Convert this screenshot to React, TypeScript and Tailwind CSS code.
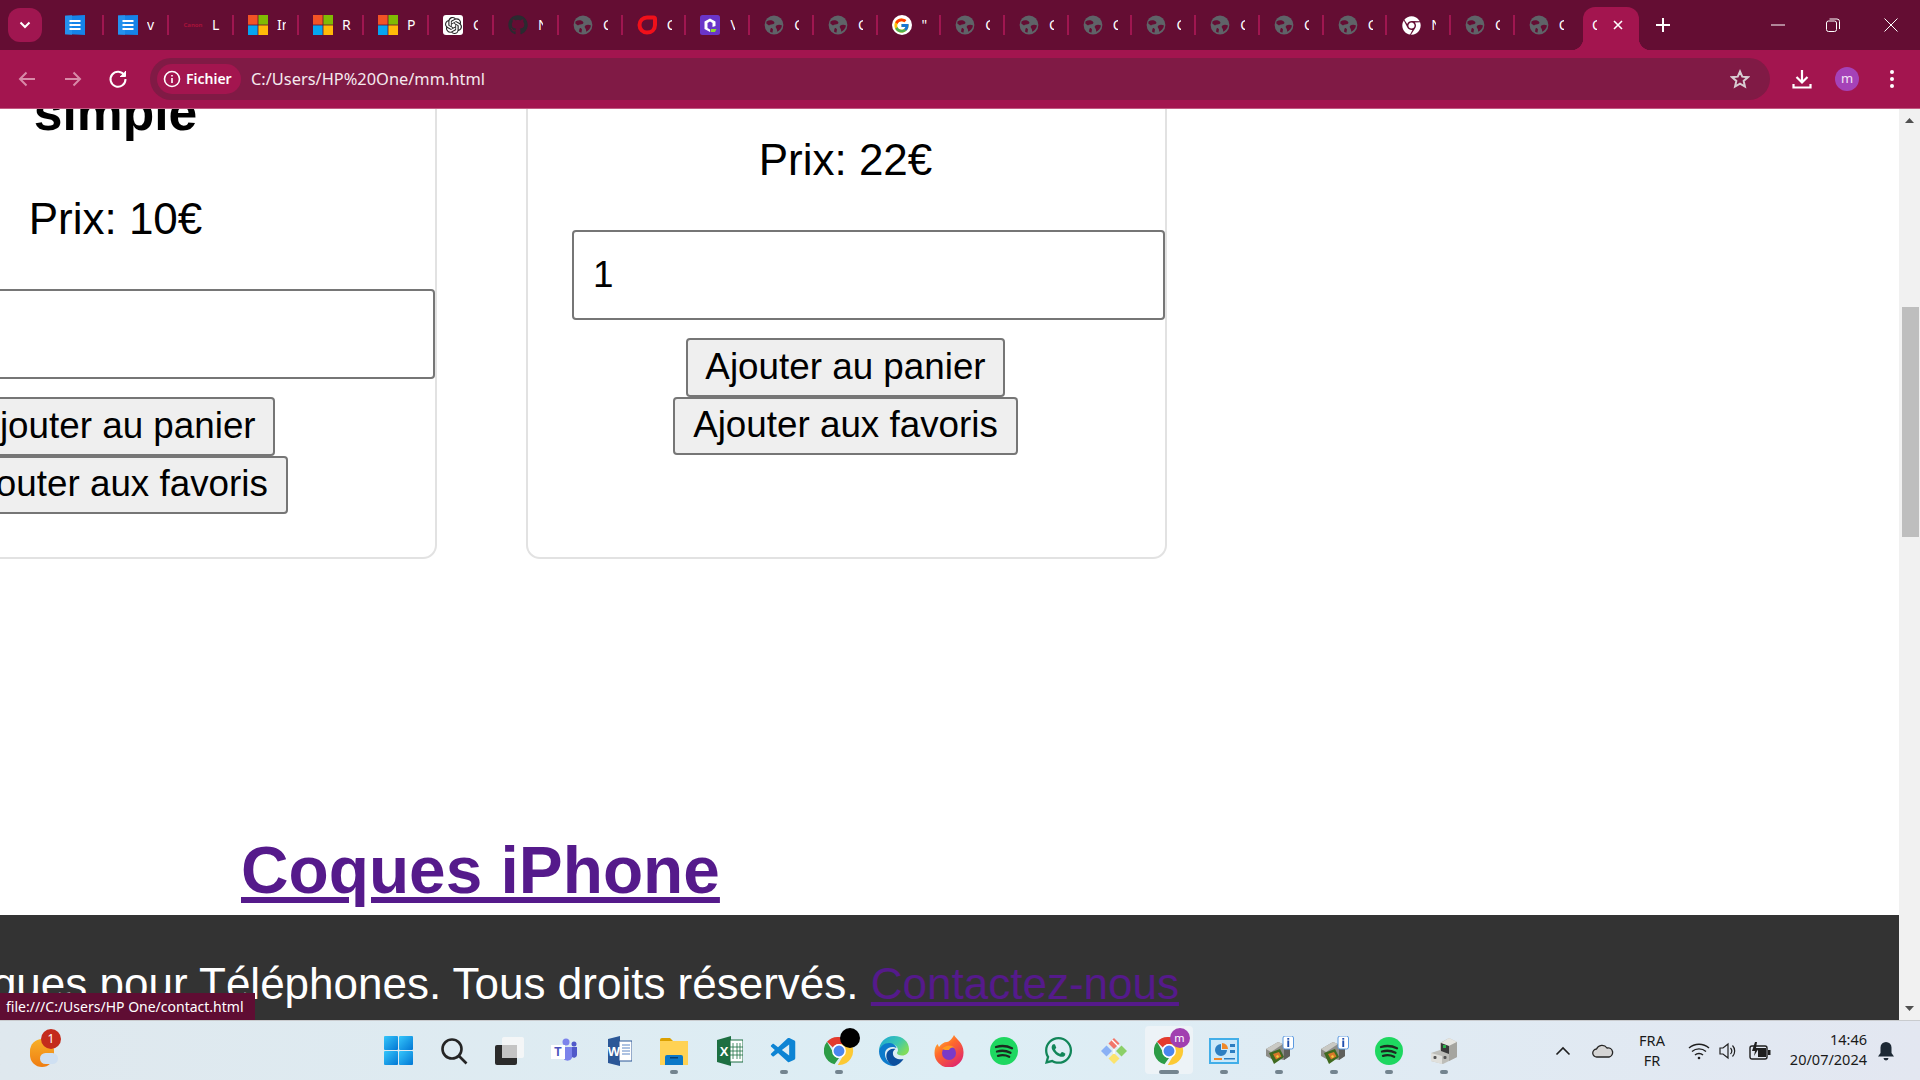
import React from "react";
import { FaGithub, FaChrome, FaWhatsapp } from "react-icons/fa";
import { FcGoogle } from "react-icons/fc";
import { SiOpenai } from "react-icons/si";
import { VscVscode } from "react-icons/vsc";

const UI = { fontFamily: '"Noto Sans", "Open Sans", sans-serif' };
const STRIP = "#640d33";

function Globe() {
  return (
    <svg width="20" height="20" viewBox="0 0 20 20">
      <circle cx="10" cy="10" r="9.400" fill="#5f6368" />
      <path d="M2.500 6.500C5 4.800 8 5 9.800 6.600c1 .9.800 2-.3 2.500-1.300.6-3.300.4-4.500 1.400L2.300 8.500z" fill={STRIP} />
      <path d="M18 10.500c-1.800-.8-4-.9-5.500 0-1 .7-1 1.800-.2 2.700.7.8.9 2.100.8 3.600 2.500-1.300 4.500-3.500 4.900-6.300z" fill={STRIP} />
      <path d="M7 13c.9 0 1.700.6 2 1.500l-.6 3.200c-1-.2-1.600-.5-2.300-.9.100-1.300.2-2.800.9-3.800z" fill={STRIP} />
    </svg>
  );
}
function Doc({ wide }: { wide?: boolean }) {
  return (
    <svg width="20" height="20" viewBox="0 0 20 20">
      <path d={wide ? "M0 .5 20 0v20L0 19.500z" : "M0 1 20 0v20L0 19z"} fill="#1583e9" />
      <path d="M0 .5 7 0v20l-7-.5z" fill="#2b97f0" opacity=".7" />
      <rect x="4.500" y="5" width="11" height="2" fill="#fff" />
      <rect x="4.500" y="9" width="11" height="2" fill="#fff" />
      <rect x="4.500" y="13" width="11" height="2" fill="#fff" />
    </svg>
  );
}
function Ms() {
  return (
    <svg width="20" height="20" viewBox="0 0 20 20">
      <rect width="9.600" height="9.600" fill="#f25325" />
      <rect x="10.400" width="9.600" height="9.600" fill="#80bb03" />
      <rect y="10.400" width="9.600" height="9.600" fill="#05a5f0" />
      <rect x="10.400" y="10.400" width="9.600" height="9.600" fill="#ffba08" />
    </svg>
  );
}
function Opera() {
  return (
    <svg width="20" height="20" viewBox="0 0 20 20">
      <path d="M10 2.500h6.500a1.500 1.500 0 0 1 1.500 1.500v6c0 4.500-3.500 7.500-8 7.500a7.500 7.500 0 0 1 0-15z" fill="none" stroke="#f0101a" strokeWidth="4" />
    </svg>
  );
}
function Purple() {
  return (
    <svg width="20" height="20" viewBox="0 0 20 20">
      <rect width="20" height="20" rx="2.500" fill="#6a35c9" />
      <path d="M10 3.500 15.500 6.500V11l-3 1V8L10 6.500 7.500 8v5l2.500 1.600V17L4.500 14V6.500z" fill="#fff" />
      <path d="M11 14h5.500l-1.500 3h-4.500z" fill="#8fdc2c" />
    </svg>
  );
}

type T = { icon: React.ReactNode; label: string; full?: boolean };
const globe = { icon: <Globe />, label: "C" };
const tabs: T[] = [
  { icon: <Doc />, label: "" },
  { icon: <Doc wide />, label: "v", full: true },
  { icon: <span className="block w-[20px] text-center text-[6px] font-bold leading-[20px] text-[#a8123a]">Canon</span>, label: "L", full: true },
  { icon: <Ms />, label: "In", full: true },
  { icon: <Ms />, label: "R", full: true },
  { icon: <Ms />, label: "P", full: true },
  { icon: <span className="flex h-[20px] w-[20px] items-center justify-center rounded-[3px] bg-white"><SiOpenai size={17} color="#222" /></span>, label: "C" },
  { icon: <FaGithub size={20} color="#2a2a30" />, label: "N" },
  globe,
  { icon: <Opera />, label: "C" },
  { icon: <Purple />, label: "V" },
  globe,
  globe,
  { icon: <span className="flex h-[20px] w-[20px] items-center justify-center rounded-full bg-white"><FcGoogle size={17} /></span>, label: '"' },
  globe, globe, globe, globe, globe, globe, globe,
  { icon: <FaChrome size={19} color="#fff" />, label: "N" },
  globe, globe,
];

function TabStrip() {
  return (
    <div className="flex h-[50px] shrink-0 items-start bg-[#640d33]" style={UI}>
      <div className="ml-[8px] mt-[8px] flex h-[34px] w-[34px] shrink-0 items-center justify-center rounded-[12px] bg-[#a01650]">
        <svg width="12" height="8" viewBox="0 0 12 8"><path d="M1.500 1.500 6 6l4.500-4.500" fill="none" stroke="#fff" strokeWidth="2" /></svg>
      </div>
      <div className="ml-[-3px] flex h-[50px] w-[1539.700px] shrink-0">
        {tabs.map((t, i) => (
          <div key={i} className={`flex h-full ${i < 8 ? "w-[65px]" : "w-[63.730px]"} shrink-0 items-center`}>
            <div className={`${i === 0 ? "ml-[26px]" : "ml-[14px]"} flex h-[20px] w-[20px] shrink-0 items-center justify-center`}>{t.icon}</div>
            <div className={`${i === 0 ? "w-0" : t.full ? "ml-[9px] w-[9px]" : "ml-[10px] w-[5px]"} h-[20px] overflow-hidden whitespace-nowrap text-[14px] leading-[20px] text-white`}>{t.label}</div>
            <div className="flex-1" />
            {i < tabs.length - 1 && <div className="h-[20px] w-[2px] shrink-0 bg-[#a01650]" />}
          </div>
        ))}
      </div>
      <div className="relative ml-[4.300px] mt-[7px] flex h-[43px] w-[56px] shrink-0 items-center rounded-t-[12px] bg-[#a3154f] pb-[7px]">
        <div className="absolute bottom-0 left-[-12px] h-[12px] w-[12px] bg-[radial-gradient(circle_at_0_0,transparent_12px,#a3154f_12.5px)]" />
        <div className="absolute bottom-0 right-[-12px] h-[12px] w-[12px] bg-[radial-gradient(circle_at_100%_0,transparent_12px,#a3154f_12.5px)]" />
        <div className="ml-[9px] h-[20px] w-[5px] overflow-hidden text-[14px] leading-[20px] text-white">C</div>
        <svg className="ml-[16px]" width="10" height="10" viewBox="0 0 10 10"><path d="M1 1l8 8M9 1l-8 8" stroke="#fff" strokeWidth="1.600" /></svg>
      </div>
      <svg className="ml-[17px] mt-[18px] shrink-0" width="14" height="14" viewBox="0 0 14 14"><path d="M7 0v14M0 7h14" stroke="#fff" strokeWidth="2" /></svg>
      <svg className="ml-[101px] mt-[24px] shrink-0" width="14" height="2" viewBox="0 0 14 2"><path d="M0 1h14" stroke="#fff" strokeWidth="1" /></svg>
      <svg className="ml-[41px] mt-[18px] shrink-0" width="14" height="14" viewBox="0 0 14 14"><rect x=".5" y="3" width="10" height="10.500" rx="2" fill="none" stroke="#fff" /><path d="M3.500 1H11a2.500 2.500 0 0 1 2.500 2.500V11" fill="none" stroke="#fff" /></svg>
      <svg className="ml-[44px] mt-[18px] shrink-0" width="14" height="14" viewBox="0 0 14 14"><path d="M.5.5l13 13M13.500.5l-13 13" stroke="#fff" strokeWidth="1" /></svg>
    </div>
  );
}

function Toolbar() {
  return (
    <div className="flex h-[59px] shrink-0 items-center border-b border-[#c25a82] bg-[#a3154f] pb-[1px] pl-[15px]" style={UI}>
      <svg width="24" height="24" viewBox="0 0 24 24" fill="none" stroke="#d88aa8" strokeWidth="2"><path d="M20 12H5M11.500 5.500 5 12l6.500 6.500" /></svg>
      <svg className="ml-[22px]" width="24" height="24" viewBox="0 0 24 24" fill="none" stroke="#d88aa8" strokeWidth="2"><path d="M4 12h15M12.500 5.500 19 12l-6.500 6.500" /></svg>
      <svg className="ml-[21px]" width="24" height="24" viewBox="0 0 24 24" fill="none" stroke="#fff" strokeWidth="2"><path d="M18.500 8.500A7.500 7.500 0 1 0 19.500 12" /><path d="M19.500 4v5.500H14" fill="#fff" strokeWidth="1" /></svg>
      <div className="ml-[20px] flex h-[42px] w-[1620px] shrink-0 items-center rounded-full bg-[#801a45] pl-[7px]">
        <div className="flex h-[30px] w-[84px] shrink-0 items-center rounded-full bg-[#a3154f] pl-[6px]">
          <svg width="18" height="18" viewBox="0 0 18 18" fill="none" stroke="#fff" strokeWidth="1.600"><circle cx="9" cy="9" r="7.500" /><path d="M9 8v5M9 5v1.600" /></svg>
          <span className="ml-[5px] text-[14px] font-semibold leading-none text-white">Fichier</span>
        </div>
        <span className="ml-[10px] mt-[2px] text-[16.400px] leading-none text-[#f5e9ee]">C:/Users/HP%20One/mm.html</span>
        <div className="flex-1" />
        <svg className="mr-[20px]" width="20" height="20" viewBox="0 0 24 24" fill="none" stroke="#d8ccd1" strokeWidth="2.400"><path d="m12 3 2.700 6.200 6.800.6-5.100 4.500 1.500 6.700L12 17.500 6.100 21l1.500-6.700-5.100-4.500 6.800-.6z" /></svg>
      </div>
      <svg className="ml-[20px]" width="24" height="24" viewBox="0 0 24 24" fill="none" stroke="#fff" strokeWidth="2.200"><path d="M12 3v12M6.500 10l5.500 5.500 5.500-5.500" /><path d="M3.500 17v3.500h17V17" /></svg>
      <div className="ml-[21px] flex h-[24px] w-[24px] items-center justify-center rounded-full bg-[#a542b8] text-[13px] leading-none text-[#f4e3f7]">m</div>
      <div className="ml-[30px] flex h-[20px] w-[6px] flex-col items-center justify-between py-[1px]">
        <span className="h-[4px] w-[4px] rounded-full bg-white" />
        <span className="h-[4px] w-[4px] rounded-full bg-white" />
        <span className="h-[4px] w-[4px] rounded-full bg-white" />
      </div>
    </div>
  );
}

const WEB = { fontFamily: '"Liberation Sans", Arial, sans-serif' };

function Actions() {
  const btn = "-translate-x-[1px] rounded-[4px] border-2 border-[#767676] bg-[#efefef] px-[16px] text-[36.8px] leading-[50px] text-black";
  return (
    <>
      <input readOnly value="1" className="h-[90px] w-[593px] shrink-0 translate-x-[22px] rounded-[4px] border-2 border-[#767676] bg-white pl-[19px] text-[36.8px] text-black outline-none" style={WEB} />
      <button className={`mt-[18px] h-[59px] w-[319px] shrink-0 pb-[2px] ${btn}`}>Ajouter au panier</button>
      <button className={`h-[58px] w-[345px] shrink-0 pb-[3px] ${btn}`}>Ajouter aux favoris</button>
    </>
  );
}

function Card({ first }: { first?: boolean }) {
  return (
    <div className="flex h-[550px] w-[641px] shrink-0 flex-col items-center rounded-[14px] border-[2.500px] border-[#e2e2e2]" style={WEB}>
      {first ? (
        <>
          <h3 className="mt-[71px] h-[60px] -translate-x-[1px] text-[51.600px] font-bold leading-[60px] text-black">simple</h3>
          <p className="mt-[52px] h-[50px] -translate-x-[1px] text-[44px] leading-[50px] text-black">Prix: 10€</p>
        </>
      ) : (
        <p className="mt-[124px] h-[50px] -translate-x-[1px] text-[44px] leading-[50px] text-black">Prix: 22€</p>
      )}
      <div className="h-[45px] shrink-0" />
      <Actions />
    </div>
  );
}

function Page() {
  return (
    <div className="relative flex min-w-0 flex-1 flex-col overflow-hidden bg-white" style={WEB}>
      <div className="ml-[-204px] mt-[-100px] flex shrink-0 gap-[89px]">
        <Card first />
        <Card />
      </div>
      <a className="ml-[241px] mt-[273px] h-[76px] shrink-0 self-start text-[65.800px] font-bold leading-[76px] text-[#551a8b] underline">Coques iPhone</a>
      <div className="mt-[7px] flex-1 overflow-hidden whitespace-nowrap bg-[#333333] pt-[43px] text-[44px] leading-[52px] text-white">
        <div className="ml-[-109px]">© Coques pour Téléphones. Tous droits réservés. <a className="text-[#551a8b] underline">Contactez-nous</a></div>
      </div>
      <div className="absolute bottom-0 left-0 flex h-[27px] w-[255px] items-center bg-[#5f0d33] pl-[6px] text-[14px] leading-none text-white" style={UI}>file:///C:/Users/HP One/contact.html</div>
    </div>
  );
}

function Scrollbar() {
  return (
    <div className="flex w-[21px] shrink-0 flex-col items-center bg-[#f1f1f1]">
      <svg className="mt-[9px]" width="9" height="5" viewBox="0 0 9 5"><path d="M4.500 0 9 5H0z" fill="#505050" /></svg>
      <div className="ml-[1px] mt-[184px] h-[230px] w-[17px] bg-[#bebebe]" />
      <div className="flex-1" />
      <svg className="mb-[9px]" width="9" height="5" viewBox="0 0 9 5"><path d="M4.500 5 9 0H0z" fill="#505050" /></svg>
    </div>
  );
}

function Chrome({ badge, letter }: { badge: string; letter?: string }) {
  return (
    <div className="relative h-[30px] w-[30px]">
      <svg width="30" height="30" viewBox="0 0 30 30">
        <path d="M15 1a14 14 0 0 1 12.100 7H15a7 7 0 0 0-6.100 3.500L3 5.800A14 14 0 0 1 15 1z" fill="#e33b2e" />
        <path d="M3 5.800l5.900 10.200A7 7 0 0 0 15 22l-4.500 6.300A14 14 0 0 1 3 5.800z" fill="#2c9c46" />
        <path d="M27.100 8A14 14 0 0 1 13.800 29l6.300-11A7 7 0 0 0 15 8z" fill="#fcc934" />
        <circle cx="15" cy="15" r="6.200" fill="#4a86ee" stroke="#fff" strokeWidth="1.500" />
      </svg>
      <span className="absolute right-[-6px] top-[-8px] flex h-[20px] w-[20px] items-center justify-center rounded-full text-[11px] leading-none text-white" style={{ background: badge }}>{letter}</span>
    </div>
  );
}
function Spotify() {
  return (
    <svg width="28" height="28" viewBox="0 0 28 28">
      <circle cx="14" cy="14" r="14" fill="#1ed760" />
      <path d="M6 10c5-1.500 11-1.200 16 1.300M7 14.500c4.500-1.200 9.500-.8 13.500 1.300M8 18.800c3.800-1 8-.7 11.200 1" fill="none" stroke="#1c2a20" strokeWidth="2.300" strokeLinecap="round" />
    </svg>
  );
}
function Printer() {
  return (
    <svg width="30" height="30" viewBox="0 0 30 30">
      <path d="M2 13 14 6l12 5v9l-6 4-5-1-4 2-9-5z" fill="#8d8d88" />
      <path d="M2 13l12-7 5 2-12 8z" fill="#c9c9c4" />
      <path d="M20 12l6-1v9l-6 4z" fill="#5f5f5b" />
      <path d="M5 17 16 13l4 8-10 7z" fill="#3f6a1f" />
      <path d="M9 18l6-2 2.500 4.500-5.500 3z" fill="#d9772a" />
      <path d="M12 20l2-1 1 2-2 1z" fill="#f0d040" />
      <rect x="19" y="0" width="10.500" height="13" rx="2" fill="#fff" stroke="#5c9ae0" />
      <rect x="23.300" y="4.500" width="1.900" height="6.500" fill="#1f4fae" />
      <rect x="23.300" y="2" width="1.900" height="1.700" fill="#1f4fae" />
    </svg>
  );
}

const apps: React.ReactNode[] = [
  <svg width="29" height="29" viewBox="0 0 29 29"><defs><linearGradient id="w1" x1="0" y1="0" x2="1" y2="1"><stop stopColor="#35c6fb" /><stop offset="1" stopColor="#0277d4" /></linearGradient></defs><rect width="14" height="14" rx="1" fill="url(#w1)" /><rect x="15" width="14" height="14" rx="1" fill="url(#w1)" /><rect y="15" width="14" height="14" rx="1" fill="url(#w1)" /><rect x="15" y="15" width="14" height="14" rx="1" fill="url(#w1)" /></svg>,
  <svg width="28" height="28" viewBox="0 0 28 28" fill="none" stroke="#252525" strokeWidth="2.600"><circle cx="12" cy="12" r="9.500" /><path d="M19 19l7.500 7.500" /></svg>,
  <svg width="30" height="30" viewBox="0 0 30 30"><rect x="1" y="9" width="22" height="20" rx="2" fill="#2b2b2b" /><rect x="8" y="1" width="22" height="21" rx="2" fill="#f6f7f7" opacity=".9" /><rect x="8" y="9" width="15" height="13" fill="#c4c4c4" /></svg>,
  <svg width="28" height="28" viewBox="0 0 28 28"><circle cx="16" cy="5" r="3.500" fill="#7b83eb" /><circle cx="24" cy="7" r="2.500" fill="#5059c9" /><path d="M13 10h9v11a5 5 0 0 1-9 0z" fill="#7b83eb" /><path d="M22 10h5v8a3 3 0 0 1-5 2z" fill="#5059c9" /><rect x="1" y="8" width="14" height="14" fill="#fff" /><text x="8" y="19" textAnchor="middle" fontSize="12" fontWeight="700" fill="#4b53bc" fontFamily="Liberation Sans">T</text></svg>,
  <svg width="27" height="30" viewBox="0 0 27 30"><path d="M3 3l12-3v30L3 27z" fill="#2b5797" /><rect x="14" y="5" width="13" height="20" fill="#fff" stroke="#2b5797" /><path d="M17 9h8M17 12h8M17 15h8M17 18h8" stroke="#5d86c5" /><text x="9" y="20" textAnchor="middle" fontSize="13" fontWeight="700" fill="#fff" fontFamily="Liberation Sans">W</text></svg>,
  <svg width="30" height="28" viewBox="0 0 30 28"><path d="M1 3a2 2 0 0 1 2-2h8l3 3H1z" fill="#dca000" /><path d="M1 4h28v24H1z" fill="#ffd254" /><path d="M8 18h14a2 2 0 0 1 2 2v8H6v-8a2 2 0 0 1 2-2z" fill="#0a78c8" /><rect x="11" y="20" width="8" height="1.500" fill="#063f72" /></svg>,
  <svg width="28" height="30" viewBox="0 0 28 30"><path d="M2 4 16 0v30L2 26z" fill="#1d6f42" /><rect x="15" y="4" width="13" height="22" fill="#fff" stroke="#1d6f42" /><path d="M18 7v16M22 7v16M25 7v16M15 11h13M15 15h13M15 19h13" stroke="#1d6f42" strokeWidth=".8" /><text x="9" y="20" textAnchor="middle" fontSize="13" fontWeight="700" fill="#fff" fontFamily="Liberation Sans">X</text></svg>,
  <VscVscode size={30} color="#0d84d4" />,
  <Chrome badge="#000000" />,
  <svg width="30" height="30" viewBox="0 0 30 30"><defs><linearGradient id="e1" x1="0" y1="0" x2="1" y2=".6"><stop stopColor="#1aa5d8" /><stop offset=".6" stopColor="#3cc7b0" /><stop offset="1" stopColor="#7fdc5c" /></linearGradient></defs><path d="M15 0c9 0 15 6 15 13 0 4-3 6.500-7 6.500-3 0-5-1-5-2.500 0-1 1-1.500 1-3 0-3-3-6-7-6C6 8 2 11 0 15 0 7 6 0 15 0z" fill="url(#e1)" /><path d="M0 15c1-5 6-8.500 11-8 4 .5 6 3 6.500 5-3-2-9-1.500-11 3-2 5 1.500 12 9 15C6 30 0 23 0 15z" fill="#0c7bcc" /><path d="M7.500 18c1-4 5-6 9-5-2 1-3 3-2.500 5.500.7 3.500 5 5.500 10.500 4.500-2.500 4-7 7-9.500 7-5-1.500-8.500-7-7.500-12z" fill="#0b4f9e" /></svg>,
  <svg width="30" height="32" viewBox="0 0 30 32"><defs><linearGradient id="f1" x1="0" y1="0" x2=".7" y2="1"><stop stopColor="#ffcf3a" /><stop offset=".45" stopColor="#ff6a2a" /><stop offset="1" stopColor="#e0276c" /></linearGradient></defs><path d="M20 0c2 4 10 8 9.500 18A14.500 14.500 0 0 1 .5 18c0-4 1-7 3-9l1.500 3c2-3 5-5 8-5 2 0 5-3 7-7z" fill="url(#f1)" /><circle cx="15" cy="18" r="7" fill="#7a3ac8" /><path d="M8 14c3-4 9-5 13-1-3-1-5 0-6 2-3 0-5 0-7-1z" fill="#ff9a1f" /></svg>,
  <Spotify />,
  <FaWhatsapp size={31} color="#128659" />,
  <svg width="30" height="30" viewBox="0 0 30 30"><path d="M15 2l5.500 5.500L15 13 9.500 7.500z" fill="#f2766a" /><path d="M22.500 9.500 28 15l-5.500 5.500L17 15z" fill="#8bd068" /><path d="M7.500 9.500 13 15l-5.500 5.500L2 15z" fill="#8ab1f5" /><path d="M15 17l5.500 5.500L15 28l-5.500-5.500z" fill="#fbe36e" /><path d="M13 4l7 7M15 13v5" stroke="#fff" strokeWidth="1.400" /></svg>,
  <Chrome badge="#a13fb0" letter="m" />,
  <svg width="30" height="26" viewBox="0 0 30 26"><rect width="30" height="26" fill="#42aee8" /><rect x="2" y="2" width="26" height="22" fill="#cbe9fa" /><path d="M12 6a6 6 0 1 0 6 6h-6z" fill="#2d7fc2" /><path d="M13 5v6h6a6 6 0 0 0-6-6z" fill="#f0892a" /><rect x="21" y="6" width="5" height="3" fill="#2d7fc2" /><rect x="21" y="12" width="5" height="3" fill="#2d7fc2" /><rect x="5" y="20" width="8" height="2" fill="#f0892a" /><rect x="15" y="20" width="11" height="1.500" fill="#2d7fc2" /></svg>,
  <Printer />,
  <Printer />,
  <Spotify />,
  <svg width="28" height="28" viewBox="0 0 28 28"><path d="M10 6 19 1l8 4v15L13 27 1 24v-8l9-3z" fill="#bdbdb8" /><path d="M19 1l8 4-8 4-8-3z" fill="#e6e6e2" /><path d="M19 9l8-4v15l-8 4z" fill="#a5a5a0" /><path d="M11 6l8 3v8l-8-3z" fill="#3a3a3a" /><rect x="13" y="8" width="3" height="3" fill="#2fb24c" /><path d="M1 16l11 3v8L1 24z" fill="#e0e0dc" /><rect x="3.500" y="19" width="3" height="3" rx="1" fill="#555" /><rect x="13.500" y="19" width="3" height="3" rx="1" fill="#555" /></svg>,
];
const pills = new Set([5, 7, 8, 14, 15, 16, 17, 18, 19]);

function Taskbar() {
  const txt = { fontFamily: '"Noto Sans", "Open Sans", sans-serif' };
  return (
    <div className="flex h-[60px] shrink-0 items-center border-t border-[#c9cbce] bg-gradient-to-r from-[#dfe8ee] via-[#ddeef5] to-[#e3e7f1]" style={txt}>
      <div className="flex h-full w-[371px] shrink-0 items-center pl-[30px]">
        <div className="relative h-[30px] w-[28px]">
          <span className="absolute left-0 top-[3px] h-[28px] w-[24px] rounded-full bg-gradient-to-b from-[#f7b028] to-[#ef7d12]" />
          <span className="absolute bottom-[2px] left-[10px] h-[11px] w-[18px] rounded-full bg-[#cfe0f2]" />
          <span className="absolute left-[11px] top-[-7px] flex h-[20px] w-[20px] items-center justify-center rounded-full bg-[#c42b1c] text-[12px] leading-none text-white">1</span>
        </div>
      </div>
      {apps.map((a, i) => (
        <div key={i} className="relative flex h-full w-[55px] shrink-0 items-center justify-center">
          {i === 14 && <div className="absolute bottom-[6px] left-[4px] top-[5px] w-[48px] rounded-[4px] bg-[#edf3f7]" />}
          <div className="relative flex h-[32px] items-center justify-center">{a}</div>
          {pills.has(i) && <span className={`absolute bottom-[6px] h-[4px] rounded-full bg-[#73848f] ${i === 14 ? "w-[20px]" : "w-[8px]"}`} />}
        </div>
      ))}
      <svg className="ml-[84px] shrink-0" width="16" height="10" viewBox="0 0 16 10" fill="none" stroke="#1f1f1f" strokeWidth="1.600"><path d="M1.500 8.500 8 2l6.500 6.500" /></svg>
      <svg className="ml-[21px] shrink-0" width="22" height="15" viewBox="0 0 22 15"><path d="M5 14a4 4 0 0 1-.5-8A6 6 0 0 1 15 5a4.500 4.500 0 0 1 2 9z" fill="#d5d5d5" stroke="#252525" strokeWidth="1.300" /></svg>
      <div className="ml-[18px] flex w-[40px] shrink-0 flex-col items-center pb-[2px] text-[14.500px] leading-[20px] text-[#1a1a1a]"><span>FRA</span><span>FR</span></div>
      <svg className="ml-[16px] shrink-0" width="22" height="18" viewBox="0 0 22 18" fill="none" stroke="#1f1f1f" strokeWidth="1.400"><path d="M1 6c5.500-5 14.500-5 20 0M4 9.500c4-3.500 10-3.500 14 0M7 13c2.200-2 5.800-2 8 0" /><circle cx="11" cy="16" r="1.300" fill="#1f1f1f" stroke="none" /></svg>
      <svg className="ml-[9px] shrink-0" width="20" height="18" viewBox="0 0 20 18" fill="none" stroke="#1f1f1f" strokeWidth="1.200"><path d="M1 6h3l5-4v14l-5-4H1z" /><path d="M11.500 6a4.500 4.500 0 0 1 0 6M13.500 3.500a8 8 0 0 1 0 11" /></svg>
      <svg className="ml-[10px] shrink-0" width="22" height="18" viewBox="0 0 22 18"><rect x="1" y="4" width="17" height="13" rx="2" fill="none" stroke="#1f1f1f" strokeWidth="1.400" /><rect x="19" y="8" width="2.500" height="5" fill="#1f1f1f" /><rect x="9" y="6" width="8" height="9" fill="#1f1f1f" /><path d="M6 0 3 9h3l-1 5 5-8H7l1-6z" fill="#1f1f1f" /></svg>
      <div className="ml-[12px] flex w-[84px] shrink-0 flex-col items-end pb-[3px] text-[14.500px] leading-[20px] text-[#1a1a1a]"><span>14:46</span><span>20/07/2024</span></div>
      <svg className="ml-[10px] shrink-0" width="18" height="20" viewBox="0 0 18 20"><path d="M9 1a5.500 5.500 0 0 0-5.500 5.500V12L1 15.500h16L14.500 12V6.500A5.500 5.500 0 0 0 9 1z" fill="#1d2935" /><path d="M6.500 17a2.500 2.500 0 0 0 5 0z" fill="#1d2935" /></svg>
    </div>
  );
}

export default function App() {
  return (
    <div className="flex h-[1080px] w-[1920px] flex-col overflow-hidden bg-white">
      <TabStrip />
      <Toolbar />
      <div className="flex min-h-0 flex-1">
        <Page />
        <Scrollbar />
      </div>
      <Taskbar />
    </div>
  );
}
